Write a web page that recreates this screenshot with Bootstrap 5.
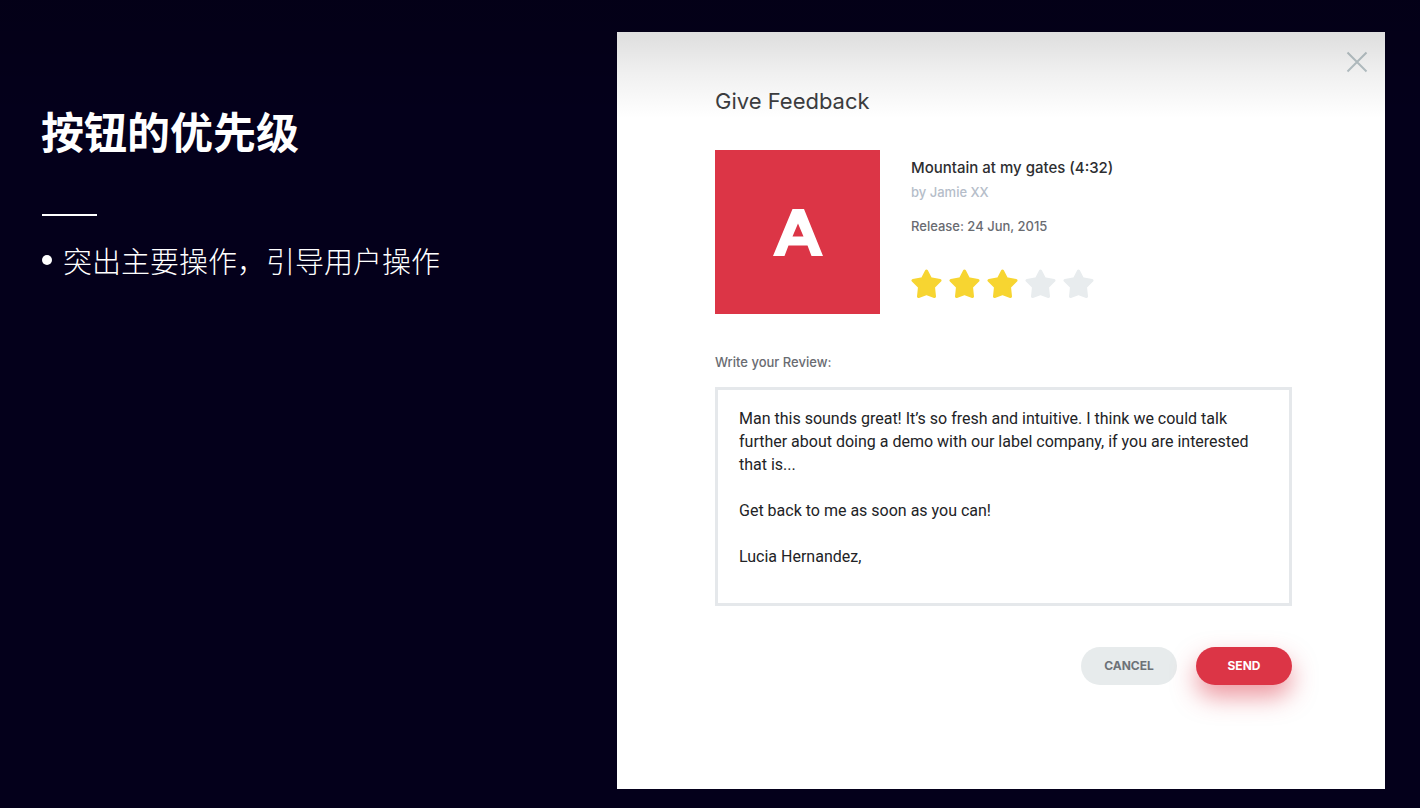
<!DOCTYPE html>
<html lang="zh-CN">
<head>
<meta charset="utf-8">
<meta name="viewport" content="width=device-width, initial-scale=1">
<title>按钮的优先级</title>
<link href="https://cdn.jsdelivr.net/npm/bootstrap@5.3.0/dist/css/bootstrap.min.css" rel="stylesheet">
<style>
  body { background: #04001b; font-family: "Inter", "Noto Sans CJK SC", sans-serif; color: #34363a; }
  .slide { display: grid; grid-template-columns: 3fr 4fr; min-height: 100vh; padding: 32px 35px 19px 41px; }
  /* soft shade along the top edge of the slide */
  .slide::before { content: ""; position: absolute; z-index: 1; top: 0; left: 0; right: 0; height: 118px; pointer-events: none;
    background: linear-gradient(rgba(0,0,0,.14), rgba(0,0,0,.12) 32%, rgba(0,0,0,.06) 62%, rgba(0,0,0,0)); }
  .intro { padding-top: 66px; color: #fff; font-family: "Noto Sans CJK SC", sans-serif; }
  .intro h1 { font-size: 43px; line-height: 64px; font-weight: 700; }
  .rule { width: 55px; height: 2px; margin: 52px 0 22px 1px; background: #fff; }
  .points { font-size: 29px; line-height: 44px; font-weight: 300; }
  .points li { display: flex; align-items: center; gap: 11px; }
  .points li::before { content: ""; flex: none; width: 10px; height: 10px; margin-left: 1px; border-radius: 50%; background: #fff; }
  .dialog-panel { background: #fff; padding: 53px 93px 104px 98px; }
  .dialog-panel h2 { font-size: 22px; line-height: 32px; font-weight: 400; margin-bottom: 33px; color: #3c3d40; }
  .close-x { top: 15px; right: 13px; padding: 4px; line-height: 0; }
  .cover { width: 165px; height: 164px; background: #dc3546; }
  .track { padding: 6px 0 0 31px; }
  .track-title { font-size: 15px; line-height: 24px; font-weight: 500; color: #2d2e31; }
  .muted-line { font-size: 13px; line-height: 24px; font-weight: 500; color: #b5bdc9; }
  .note { font-size: 13px; line-height: 20px; font-weight: 500; color: #696b71; }
  .rating { gap: 6px; margin: 32px 0 0; }
  .rating label { line-height: 0; cursor: pointer; color: #e8ecee; }
  .rating label.on { color: #f7d531; }
  .field { margin-top: 38px; }
  .review { height: 219px; margin-top: 15px; padding: 17px 21px; border: 3px solid #e5e8eb; border-radius: 0; resize: none; overflow: hidden;
    font-family: "Roboto", sans-serif; font-size: 16px; line-height: 23px; font-weight: 400; color: #222326; }
  .actions { gap: 19px; margin-top: 41px; }
  .pill { width: 96px; height: 38px; padding: 0; border: 0; font-size: 12px; line-height: 20px; font-weight: 700; }
  .pill-cancel, .pill-cancel:hover { background: #e7ebec; color: #6d7278; }
  .pill-send, .pill-send:hover { background: #dc3546; color: #fff; box-shadow: 0 12px 24px rgba(220,53,70,.5); }
</style>
</head>
<body>
<main class="slide position-relative">
  <section class="intro">
    <h1 class="mb-0">按钮的优先级</h1>
    <div class="rule"></div>
    <ul class="points list-unstyled mb-0"><li>突出主要操作，引导用户操作</li></ul>
  </section>

  <form class="dialog-panel position-relative" onsubmit="return false">
    <button type="button" class="close-x btn border-0 position-absolute" aria-label="Close">
      <svg width="22" height="22" viewBox="0 0 22 22" fill="none" stroke="#bcc7cb" stroke-width="2"><path d="M1.500 1.500l19 19M20.500 1.500l-19 19"/></svg>
    </button>
    <h2>Give Feedback</h2>
    <div class="d-flex">
      <div class="cover flex-shrink-0 d-flex align-items-center justify-content-center">
        <svg width="50" height="47" viewBox="0 0 50 47" fill="#fff" fill-rule="evenodd" aria-hidden="true"><path d="M19.500 0h11.500l19 47h-11.500l-4-10.500h-19l-4 10.500h-11.500zM25 14.500l-5.500 13h11z"/></svg>
      </div>
      <div class="track">
        <div class="track-title">Mountain at my gates (4:32)</div>
        <div class="muted-line">by Jamie XX</div>
        <div class="note mt-2 pt-1">Release: 24 Jun, 2015</div>
        <fieldset class="rating d-flex">
          <input class="visually-hidden" type="radio" name="stars" id="s1"><label class="on" for="s1" aria-label="1 star"><svg width="32" height="32"><use href="#star"/></svg></label>
          <input class="visually-hidden" type="radio" name="stars" id="s2"><label class="on" for="s2" aria-label="2 stars"><svg width="32" height="32"><use href="#star"/></svg></label>
          <input class="visually-hidden" type="radio" name="stars" id="s3" checked><label class="on" for="s3" aria-label="3 stars"><svg width="32" height="32"><use href="#star"/></svg></label>
          <input class="visually-hidden" type="radio" name="stars" id="s4"><label for="s4" aria-label="4 stars"><svg width="32" height="32"><use href="#star"/></svg></label>
          <input class="visually-hidden" type="radio" name="stars" id="s5"><label for="s5" aria-label="5 stars"><svg width="32" height="32"><use href="#star"/></svg></label>
        </fieldset>
      </div>
    </div>
    <div class="field">
      <label class="note d-block" for="review">Write your Review:</label>
      <textarea class="review form-control" id="review" spellcheck="false">Man this sounds great! It’s so fresh and intuitive. I think we could talk further about doing a demo with our label company, if you are interested that is...

Get back to me as soon as you can!

Lucia Hernandez,</textarea>
    </div>
    <div class="actions d-flex justify-content-end">
      <button type="button" class="pill pill-cancel btn rounded-pill">CANCEL</button>
      <button type="submit" class="pill pill-send btn rounded-pill">SEND</button>
    </div>
  </form>
</main>
<svg class="d-none"><symbol id="star" viewBox="0 0 32 32"><path fill="currentColor" stroke="currentColor" stroke-width="3" stroke-linejoin="round" d="M15.500 3l4 7.800 9.500 1.700-6.500 6.500 1 9.500-8-2.800-8 2.800 1-9.500-6.500-6.500 9.500-1.700z"/></symbol></svg>
<script src="https://cdn.jsdelivr.net/npm/bootstrap@5.3.0/dist/js/bootstrap.bundle.min.js"></script>
</body>
</html>
